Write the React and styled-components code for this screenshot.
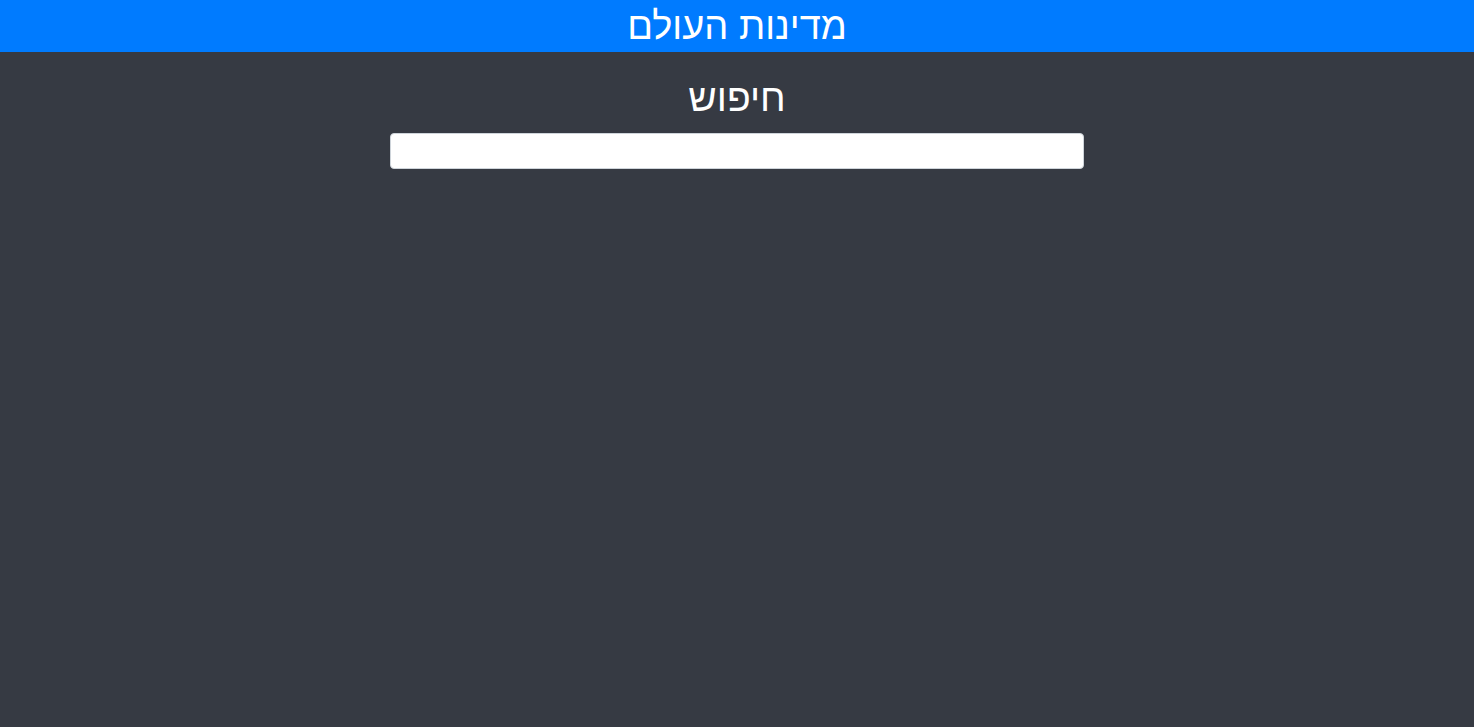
import styled, { createGlobalStyle } from "styled-components"

const GlobalStyle = createGlobalStyle`
  html, body {
    margin: 0;
    padding: 0;
    height: 100%;
    background-color: #363a43;
  }
  #root {
    min-height: 100vh;
  }
`

const Page = styled.div`
  min-height: 100vh;
  background-color: #363a43;
  direction: rtl;
  font-family: "Liberation Sans", "DejaVu Sans", sans-serif;
  color: white;
`

const Header = styled.header`
  height: 52px;
  background-color: #007bff;
  display: flex;
  align-items: center;
  justify-content: center;
`

const Title = styled.h1`
  margin: 0;
  font-size: 38px;
  font-weight: normal;
  line-height: 1;
`

const SearchSection = styled.section`
  display: flex;
  flex-direction: column;
  align-items: center;
  padding-top: 25px;
`

const SearchLabel = styled.h2`
  margin: 0 0 13px;
  font-size: 39px;
  font-weight: normal;
  line-height: 1.1;
`

const SearchInput = styled.input`
  width: 694px;
  height: 36px;
  box-sizing: border-box;
  border: 1px solid #ced4da;
  border-radius: 4px;
  background: white;
  font-size: 16px;
  padding: 0 10px;
  font-family: inherit;
  direction: rtl;
  outline: none;
`

export default function App() {
  return (
    <>
      <GlobalStyle />
      <Page>
        <Header>
          <Title>מדינות העולם</Title>
        </Header>
        <SearchSection>
          <SearchLabel>חיפוש</SearchLabel>
          <SearchInput type="text" />
        </SearchSection>
      </Page>
    </>
  )
}
